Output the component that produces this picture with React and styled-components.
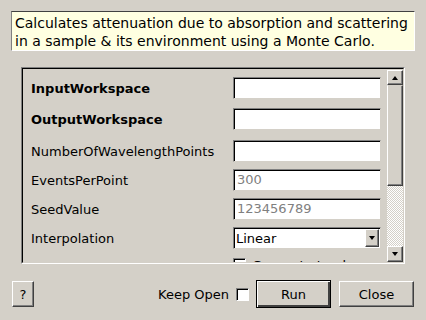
import React from "react";
import styled, { createGlobalStyle } from "styled-components";

const GlobalStyle = createGlobalStyle`
  html, body {
    margin: 0;
    padding: 0;
    background: #d4d0c8;
  }
  body {
    font-family: "DejaVu Sans", "Liberation Sans", sans-serif;
    font-size: 13px;
    color: #000;
  }
`;

const Dialog = styled.div`
  width: 426px;
  height: 320px;
  background: #d4d0c8;
  display: flex;
  flex-direction: column;
  box-sizing: border-box;
  padding: 11px 11px 0 11px;
  overflow: hidden;
`;

const Tooltip = styled.div`
  width: 404px;
  height: 40px;
  box-sizing: border-box;
  background: #ffffe1;
  border: 1px solid;
  border-color: #404040 #ffffff #ffffff #808080;
  padding: 2px 3px 0 3px;
  font-size: 14px;
  line-height: 18px;
  white-space: nowrap;
  overflow: hidden;
`;

const ScrollFrame = styled.div`
  margin: 16px 0 0 10px;
  width: 384px;
  height: 197px;
  box-sizing: border-box;
  border: 1px solid;
  border-color: #808080 #ffffff #ffffff #808080;
  display: flex;
`;

const ScrollInner = styled.div`
  flex: 1;
  display: flex;
  border: 1px solid;
  border-color: #000 #d4d0c8 #d4d0c8 #000;
`;

const Content = styled.div`
  flex: 1;
  overflow: hidden;
  padding: 8px 0 0 8px;
`;

const Row = styled.div`
  display: flex;
  align-items: center;
  height: 22px;
  margin-top: ${(p) => p.gap || 0}px;
`;

const Label = styled.div`
  width: 202px;
  flex: none;
  font-weight: ${(p) => (p.bold ? 700 : 400)};
  white-space: nowrap;
`;

const Field = styled.div`
  width: 148px;
  height: 22px;
  box-sizing: border-box;
  background: #fff;
  border: 1px solid;
  border-color: #808080 #d4d0c8 #d4d0c8 #808080;
  box-shadow: inset 1px 1px 0 #000;
  color: #808080;
  padding: 1px 0 0 3px;
  line-height: 18px;
`;

const Combo = styled(Field)`
  color: #000;
  display: flex;
  align-items: center;
  justify-content: space-between;
  padding: 0 1px 0 2px;
  line-height: normal;
`;

const ArrowButton = styled.div`
  width: ${(p) => p.w || 14}px;
  height: ${(p) => p.h || 16}px;
  box-sizing: border-box;
  background: #d4d0c8;
  border: 1px solid;
  border-color: #fff #404040 #404040 #fff;
  box-shadow: inset -1px -1px 0 #808080;
  display: flex;
  align-items: center;
  justify-content: center;
  flex: none;
`;

const Triangle = styled.div`
  width: 0;
  height: 0;
  border-left: 3.5px solid transparent;
  border-right: 3.5px solid transparent;
  ${(p) =>
    p.up
      ? "border-bottom: 4px solid #000;"
      : "border-top: 4px solid #000;"}
`;

const Scrollbar = styled.div`
  width: 16px;
  display: flex;
  flex-direction: column;
  padding-top: 1px;
`;

const Thumb = styled.div`
  height: 101px;
  box-sizing: border-box;
  background: #d4d0c8;
  border: 1px solid;
  border-color: #d4d0c8 #404040 #404040 #fff;
  box-shadow: inset -1px -1px 0 #808080;
`;

const Track = styled.div`
  flex: 1;
  background-color: #fff;
  background-image: repeating-conic-gradient(#d4d0c8 0 25%, #fff 0 50%);
  background-size: 2px 2px;
`;

const CheckBox = styled.div`
  width: 13px;
  height: 13px;
  box-sizing: border-box;
  background: #fff;
  border: 1px solid;
  border-color: #808080 #fff #fff #808080;
  box-shadow: inset 1px 1px 0 #000;
  flex: none;
`;

const CheckRow = styled.div`
  display: flex;
  align-items: flex-start;
  gap: 6px;
  height: 22px;
  margin-top: 9px;
  padding-left: 202px;
`;

const Footer = styled.div`
  display: flex;
  align-items: center;
  margin: 16px 1px 0 0;
  height: 28px;
`;

const Button = styled.button`
  font-family: inherit;
  font-size: 13px;
  color: #000;
  background: #d4d0c8;
  width: ${(p) => p.w}px;
  height: 26px;
  box-sizing: border-box;
  padding: 0;
  border: 1px solid;
  border-color: #fff #404040 #404040 #fff;
  box-shadow: inset -1px -1px 0 #808080;
  margin-left: ${(p) => p.ml || 0}px;
  ${(p) =>
    p.primary &&
    `
    height: 28px;
    border: 1px solid #000;
    box-shadow: inset 1px 1px 0 #fff, inset -2px -2px 0 #404040;
  `}
`;

const KeepOpen = styled.span`
  margin-left: auto;
  margin-right: 7px;
`;

const rows = [
  { label: "InputWorkspace", bold: true, gap: 0 },
  { label: "OutputWorkspace", bold: true, gap: 9 },
  { label: "NumberOfWavelengthPoints", gap: 10 },
  { label: "EventsPerPoint", value: "300", gap: 7 },
  { label: "SeedValue", value: "123456789", gap: 7 },
];

export default function App() {
  return (
    <>
      <GlobalStyle />
      <Dialog>
        <Tooltip>
          Calculates attenuation due to absorption and scattering
          <br />
          in a sample &amp; its environment using a Monte Carlo.
        </Tooltip>
        <ScrollFrame>
          <ScrollInner>
            <Content>
              {rows.map((r) => (
                <Row key={r.label} gap={r.gap}>
                  <Label bold={r.bold}>{r.label}</Label>
                  <Field>{r.value}</Field>
                </Row>
              ))}
              <Row gap={7}>
                <Label>Interpolation</Label>
                <Combo>
                  Linear
                  <ArrowButton w={14} h={18}>
                    <Triangle />
                  </ArrowButton>
                </Combo>
              </Row>
              <CheckRow>
                <CheckBox />
                <span>Generate tracks</span>
              </CheckRow>
            </Content>
            <Scrollbar>
              <ArrowButton w={16} h={15}>
                <Triangle up />
              </ArrowButton>
              <Thumb />
              <Track />
              <ArrowButton w={16} h={16}>
                <Triangle />
              </ArrowButton>
            </Scrollbar>
          </ScrollInner>
        </ScrollFrame>
        <Footer>
          <Button w={22} ml={1}>?</Button>
          <KeepOpen>Keep Open</KeepOpen>
          <CheckBox />
          <Button w={75} ml={7} primary>
            Run
          </Button>
          <Button w={75} ml={8}>
            Close
          </Button>
        </Footer>
      </Dialog>
    </>
  );
}
